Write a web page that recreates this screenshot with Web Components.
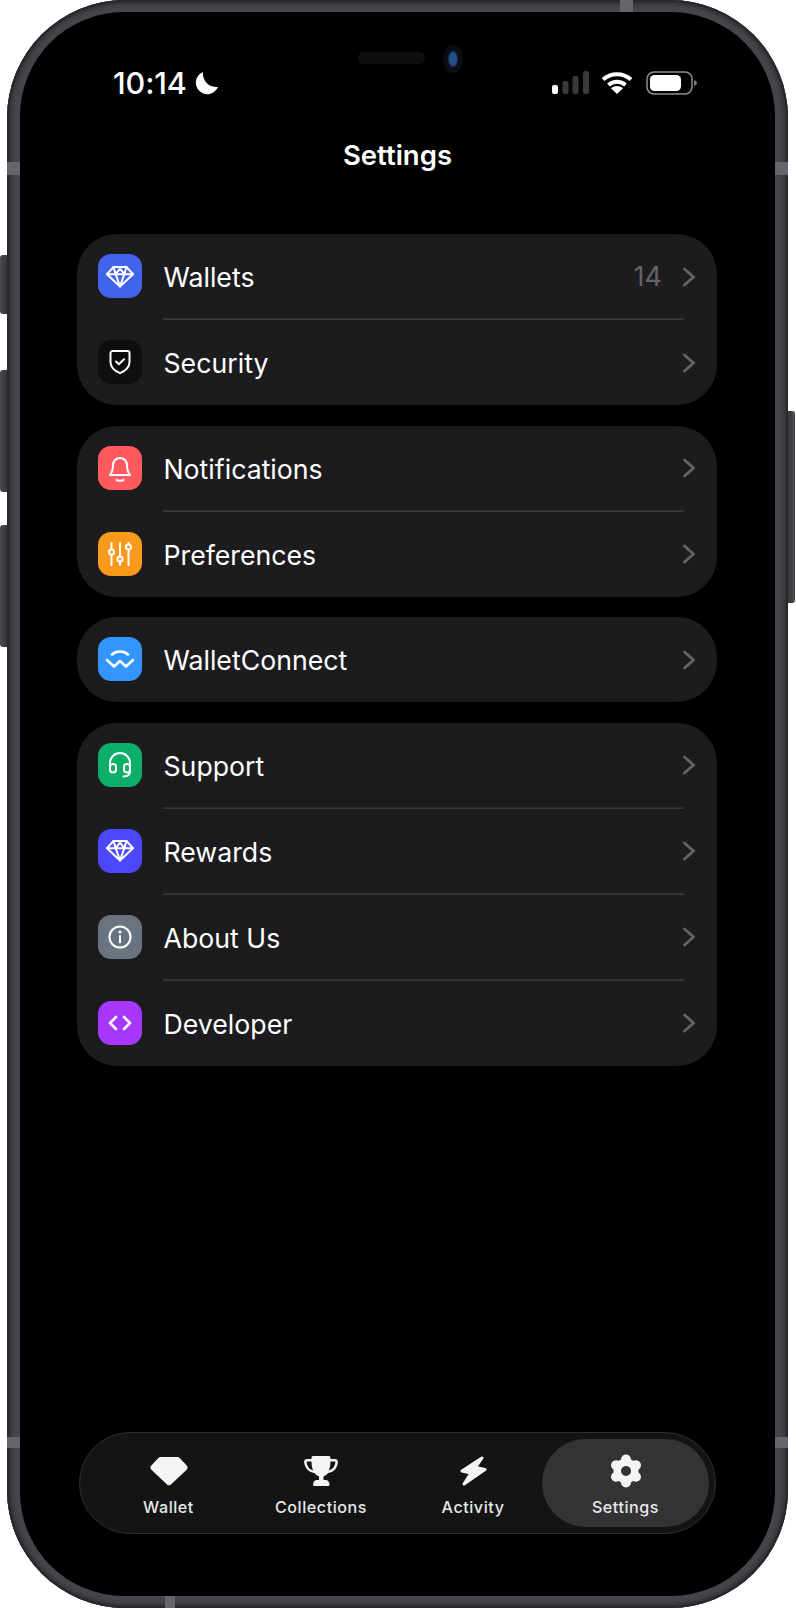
<!DOCTYPE html>
<html lang="en">
<head>
<meta charset="utf-8">
<title>Settings</title>
<style>
  html, body { margin: 0; background: #fff; }
  body { font-family: Inter, "Liberation Sans", sans-serif; color: #fff; }
</style>
</head>
<body>
<phone-frame>
  <status-bar></status-bar>
  <screen-title>Settings</screen-title>
  <settings-list>
    <settings-group>
      <settings-row icon="gem" color="#4263eb" label="Wallets" detail="14"></settings-row>
      <settings-row icon="shield" color="#0d0e10" label="Security"></settings-row>
    </settings-group>
    <settings-group>
      <settings-row icon="bell" color="#ff5a5f" label="Notifications"></settings-row>
      <settings-row icon="sliders" color="#fa9a1b" label="Preferences"></settings-row>
    </settings-group>
    <settings-group>
      <settings-row icon="wc" color="#3396ff" label="WalletConnect"></settings-row>
    </settings-group>
    <settings-group>
      <settings-row icon="headset" color="#0daf68" label="Support"></settings-row>
      <settings-row icon="gem" color="#4b48ff" label="Rewards"></settings-row>
      <settings-row icon="info" color="#6b7280" label="About Us"></settings-row>
      <settings-row icon="code" color="#a737ff" label="Developer"></settings-row>
    </settings-group>
  </settings-list>
  <tab-bar>
    <tab-item icon="gem" label="Wallet"></tab-item>
    <tab-item icon="trophy" label="Collections"></tab-item>
    <tab-item icon="bolt" label="Activity"></tab-item>
    <tab-item icon="gear" label="Settings" active></tab-item>
  </tab-bar>
</phone-frame>

<script>
const ROW_ICONS = {
  gem: `<svg width="30" height="23" viewBox="0 0 30 23" fill="none" stroke="#fff" stroke-width="2" stroke-linejoin="round" stroke-linecap="round"><path d="M8.500 2h13L28 9.200 15 21.500 2 9.200z"/><path d="M2 9.200h26M8.500 2l2.200 7.200L15 21.500l4.300-12.300L21.500 2M10.700 9.200 15 3.500l4.300 5.700"/></svg>`,
  shield: `<svg width="22" height="26" viewBox="0 0 22 26" fill="none" stroke="#fff" stroke-width="2" stroke-linejoin="round" stroke-linecap="round"><path d="M3.500 2h15a2 2 0 0 1 2 2v9c0 5.500-4.500 9-9.500 11.200C6 22 1.500 18.500 1.500 13V4a2 2 0 0 1 2-2z"/><path d="M7 12.500l2.800 2.800 5.200-5"/></svg>`,
  bell: `<svg width="24" height="28" viewBox="0 0 24 28" fill="none" stroke="#fff" stroke-width="2" stroke-linejoin="round" stroke-linecap="round"><path d="M5 11a7 7 0 0 1 14 0c0 5 1 7.500 3 10H2c2-2.500 3-5 3-10z"/><path d="M8.500 26c2 .9 5 .9 7 0"/></svg>`,
  sliders: `<svg width="24" height="26" viewBox="0 0 24 26" fill="none" stroke="#fff" stroke-width="2" stroke-linecap="round"><path d="M3.500 2v6M3.500 14v10M12 2v13M12 21v3M20.500 2v1M20.500 9v15"/><circle cx="3.500" cy="11" r="2.600"/><circle cx="12" cy="18" r="2.600"/><circle cx="20.500" cy="6" r="2.600"/></svg>`,
  wc: `<svg width="30" height="20" viewBox="0 0 30 20" fill="none" stroke="#fff" stroke-width="2.600" stroke-linecap="round" stroke-linejoin="round"><path d="M7 5.500C11 1.500 19 1.500 23 5.500"/><path d="M2 11l7 6.500 6-5.500 6 5.500 7-6.500"/></svg>`,
  headset: `<svg width="24" height="28" viewBox="0 0 24 28" fill="none" stroke="#fff" stroke-width="2" stroke-linecap="round" stroke-linejoin="round"><path d="M2 18v-6a10 10 0 0 1 20 0v6"/><rect x="2" y="13" width="6" height="8.500" rx="3"/><rect x="16" y="13" width="6" height="8.500" rx="3"/><path d="M22 20c0 3.500-2.500 5.500-6.500 5.500"/></svg>`,
  info: `<svg width="24" height="24" viewBox="0 0 24 24" fill="none" stroke="#fff" stroke-width="2" stroke-linecap="round"><circle cx="12" cy="12" r="10.500"/><path d="M12 11v6.500"/><circle cx="12" cy="7" r=".6" fill="#fff"/></svg>`,
  code: `<svg width="24" height="16" viewBox="0 0 24 16" fill="none" stroke="#fff" stroke-width="2.600" stroke-linecap="round" stroke-linejoin="round"><path d="M8 2L2 8l6 6M16 2l6 6-6 6"/></svg>`
};

const TAB_ICONS = {
  gem: `<svg width="38" height="30" viewBox="0 0 38 30"><path fill="#f4f4f4" d="M10.500 1h17a3 3 0 0 1 2.200 1l7 7.500c1.200 1.300 1.200 3-.1 4.200L21 28.400a3 3 0 0 1-4 0L1.400 13.700C.1 12.500.1 10.800 1.300 9.500l7-7.500a3 3 0 0 1 2.200-1z"/></svg>`,
  trophy: `<svg width="34" height="32" viewBox="0 0 34 32"><path fill="#f4f4f4" d="M9 1h16a1.500 1.500 0 0 1 1.500 1.500V4h4.500C32.600 4 34 5.300 33.900 7c-.4 6-3.900 10-9.700 11-1.300 1.600-2.900 2.800-4.700 3.300V25h2.500c1.500 0 2.500 1 3 2.500l.5 1.500c.3 1-.3 2-1.500 2H10.500C9.300 31 8.700 30 9 29l.5-1.500c.5-1.500 1.500-2.500 3-2.500H15v-3.700c-1.800-.5-3.400-1.700-4.700-3.300C4.500 17 .6 13 .1 7 0 5.300 1.400 4 3 4h4.500V2.500A1.500 1.500 0 0 1 9 1zM3 6.600c-.3 0-.4.200-.4.500.4 4.400 2.700 7.400 6.500 8.500-1-2.400-1.600-5.400-1.600-9zm28 0h-4.500c0 3.600-.6 6.600-1.600 9 3.800-1.100 6.100-4.100 6.500-8.500 0-.3-.1-.5-.4-.5z"/></svg>`,
  bolt: `<svg width="28" height="32" viewBox="0 0 28 32"><path fill="#f4f4f4" stroke="#f4f4f4" stroke-width="3" stroke-linejoin="round" d="M23 3L3 16l9 2-7 11 21-14.500-9.500-2z"/></svg>`,
  gear: `<svg width="34" height="34" viewBox="-17 -17 34 34"><g stroke="#f4f4f4" stroke-width="10" stroke-linecap="round"><path d="M0-11.500V11.500M-10-5.750 10 5.750M-10 5.750 10-5.750"/></g><circle r="12.500" fill="#f4f4f4"/><circle r="5" fill="#333335"/></svg>`
};

class PhoneFrame extends HTMLElement {
  constructor() {
    super();
    this.attachShadow({ mode: "open" }).innerHTML = `
      <style>
        :host { display: block; width: 796px; height: 1608px; position: relative; }
        .body {
          box-sizing: border-box; width: 781px; height: 1608px; margin-left: 7px; padding: 12px 13px;
          border-radius: 118px; background: #45454c;
          box-shadow: inset 0 0 0 2px #28282c, inset 0 0 4px 4px #2e2e33;
        }
        .screen {
          box-sizing: border-box; height: 100%; border-radius: 104px; background: #000;
          display: flex; flex-direction: column; position: relative; overflow: hidden;
        }
        .btn { position: absolute; background: linear-gradient(90deg, #4a4a50, #35353a); }
        .btn.l { left: 0; width: 7px; border-radius: 3px 0 0 3px; }
        .btn.r { left: 788px; width: 7px; border-radius: 0 3px 3px 0; background: linear-gradient(90deg, #35353a, #4a4a50); }
        .band { position: absolute; background: #66656b; }
        .speaker { position: absolute; left: 338px; top: 40px; width: 67px; height: 12px; border-radius: 6px; background: #0e0e10; }
        .camera { position: absolute; left: 423px; top: 33px; width: 20px; height: 28px; border-radius: 10px / 14px; background: #0b0d12; display: flex; align-items: center; justify-content: center; }
        .camera i { display: block; width: 10px; height: 16px; border-radius: 5px / 8px; background: #254f86; box-shadow: inset 0 0 0 1px #17283f; }
      </style>
      <div class="btn l" style="top:255px;height:59px"></div>
      <div class="btn l" style="top:370px;height:122px"></div>
      <div class="btn l" style="top:525px;height:122px"></div>
      <div class="btn r" style="top:411px;height:192px"></div>
      <div class="body">
        <div class="screen">
          <div class="speaker"></div>
          <div class="camera"><i></i></div>
          <slot></slot>
        </div>
      </div>
      <div class="band" style="left:7px;top:162px;width:13px;height:13px"></div>
      <div class="band" style="left:775px;top:162px;width:13px;height:13px"></div>
      <div class="band" style="left:7px;top:1437px;width:13px;height:11px"></div>
      <div class="band" style="left:775px;top:1437px;width:13px;height:11px"></div>
      <div class="band" style="left:620px;top:0;width:13px;height:12px"></div>
      <div class="band" style="left:165px;top:1596px;width:10px;height:12px"></div>
    `;
  }
}

class StatusBar extends HTMLElement {
  constructor() {
    super();
    this.attachShadow({ mode: "open" }).innerHTML = `
      <style>
        :host { display: flex; align-items: center; justify-content: space-between; box-sizing: border-box; height: 36px; margin-top: 53px; padding: 0 77px 0 93px; }
        .left, .right { display: flex; align-items: center; }
        .time { font: 500 30.500px/36px Inter, "Liberation Sans", sans-serif; color: #fff; letter-spacing: -.1px; }
        .moon { margin-left: 8px; }
        .right svg { display: block; }
        .wifi { margin-left: 12px; }
        .battery { margin-left: 13px; }
      </style>
      <div class="left">
        <span class="time">10:14</span>
        <svg class="moon" width="24" height="24" viewBox="0 0 24 24"><path fill="#fff" d="M8 1A11.500 11.500 0 1 0 23 16 13.500 13.500 0 0 1 8 1z"/></svg>
      </div>
      <div class="right">
        <svg width="37" height="24" viewBox="0 0 37 24"><rect x="0" y="14" width="6" height="9" rx="2" fill="#fff"/><rect x="10.500" y="10" width="6" height="13" rx="2" fill="#3a3a3c"/><rect x="20.500" y="5" width="6" height="18" rx="2" fill="#3a3a3c"/><rect x="31" y="0" width="6" height="23" rx="2" fill="#3a3a3c"/></svg>
        <svg class="wifi" width="32" height="24" viewBox="0 0 32 24" fill="none" stroke="#fff" stroke-width="4"><path d="M2 8.500c8-7 20-7 28 0"/><path d="M7.500 14c5-4.300 12-4.300 17 0"/><path fill="#fff" stroke="none" d="M16 23l-6-5.800c3.500-2.900 8.500-2.900 12 0z"/></svg>
        <svg class="battery" width="52" height="24" viewBox="0 0 52 24"><rect x="1" y="1" width="45" height="22" rx="7" fill="none" stroke="#8e8e93" stroke-width="1.500"/><rect x="4" y="4" width="31" height="16" rx="4.500" fill="#fff"/><path fill="#77777b" d="M48 9c1.500.5 3 1.500 3 3s-1.500 2.500-3 3z"/></svg>
      </div>
    `;
  }
}

class ScreenTitle extends HTMLElement {
  constructor() {
    super();
    this.attachShadow({ mode: "open" }).innerHTML = `
      <style>
        :host { display: block; margin-top: 37px; height: 34px; text-align: center; font: 600 27.500px/34px Inter, "Liberation Sans", sans-serif; color: #fff; }
      </style>
      <slot></slot>
    `;
  }
}

class SettingsList extends HTMLElement {
  constructor() {
    super();
    this.attachShadow({ mode: "open" }).innerHTML = `
      <style>
        :host { display: flex; flex-direction: column; gap: 20.500px; margin-top: 62px; padding: 0 58px 0 57px; }
      </style>
      <slot></slot>
    `;
  }
}

class SettingsGroup extends HTMLElement {
  constructor() {
    super();
    this.attachShadow({ mode: "open" }).innerHTML = `
      <style>
        :host { display: block; background: #1c1c1e; border-radius: 40px; overflow: hidden; }
        ::slotted(settings-row:not(:last-child)) { --row-line: 1px; }
      </style>
      <slot></slot>
    `;
  }
}

class SettingsRow extends HTMLElement {
  connectedCallback() {
    const icon = this.getAttribute("icon");
    const color = this.getAttribute("color");
    const label = this.getAttribute("label");
    const detail = this.getAttribute("detail");
    this.attachShadow({ mode: "open" }).innerHTML = `
      <style>
        :host { display: block; }
        .row { display: flex; align-items: center; box-sizing: border-box; height: 85px; padding: 0 21px 1px; }
        .icon { width: 44px; height: 44px; border-radius: 13px; background: ${color}; display: flex; align-items: center; justify-content: center; flex: none; }
        .label { margin-left: 21.500px; padding-top: 2px; flex: 1; font: 400 26.700px/34px Inter, "Liberation Sans", sans-serif; color: #fff; }
        .detail { padding-top: 2px; font: 400 27px/34px Inter, "Liberation Sans", sans-serif; color: #636366; margin-right: 20px; }
        .chev { display: block; flex: none; margin-top: 1px; }
        .line { margin: 0 33px 0 86px; height: var(--row-line, 0); background: #38383a; box-shadow: 0 -1px 0 rgba(56, 56, 58, .6); }
      </style>
      <div class="row">
        <span class="icon">${ROW_ICONS[icon]}</span>
        <span class="label">${label}</span>
        ${detail ? `<span class="detail">${detail}</span>` : ""}
        <svg class="chev" width="14" height="20" viewBox="0 0 14 20" fill="none" stroke="#636366" stroke-width="3" stroke-linecap="round" stroke-linejoin="round"><path d="M2.500 2l9 8-9 8"/></svg>
      </div>
      <div class="line"></div>
    `;
  }
}

class TabBar extends HTMLElement {
  constructor() {
    super();
    this.attachShadow({ mode: "open" }).innerHTML = `
      <style>
        :host {
          display: grid; grid-template-columns: 139px 166px 138px 167px; box-sizing: border-box;
          height: 102px; margin: auto 59px 62px; padding: 6px 5px 6px 19px;
          background: #141414; border: 1.500px solid #2e2e30; border-radius: 51px;
        }
      </style>
      <slot></slot>
    `;
  }
}

class TabItem extends HTMLElement {
  connectedCallback() {
    const active = this.hasAttribute("active");
    this.attachShadow({ mode: "open" }).innerHTML = `
      <style>
        :host { display: flex; }
        .tab { flex: 1; display: flex; flex-direction: column; align-items: center; border-radius: 45px; background: ${active ? "#333335" : "transparent"}; }
        .glyph { height: 38px; margin-top: 13px; display: flex; align-items: center; justify-content: center; }
        .glyph svg { display: block; }
        .name { margin-top: 7px; font: 500 16.100px/20px Inter, "Liberation Sans", sans-serif; letter-spacing: .55px; color: #e8e8e8; }
      </style>
      <div class="tab">
        <span class="glyph">${TAB_ICONS[this.getAttribute("icon")]}</span>
        <span class="name">${this.getAttribute("label")}</span>
      </div>
    `;
  }
}

customElements.define("phone-frame", PhoneFrame);
customElements.define("status-bar", StatusBar);
customElements.define("screen-title", ScreenTitle);
customElements.define("settings-list", SettingsList);
customElements.define("settings-group", SettingsGroup);
customElements.define("settings-row", SettingsRow);
customElements.define("tab-bar", TabBar);
customElements.define("tab-item", TabItem);
</script>
</body>
</html>
